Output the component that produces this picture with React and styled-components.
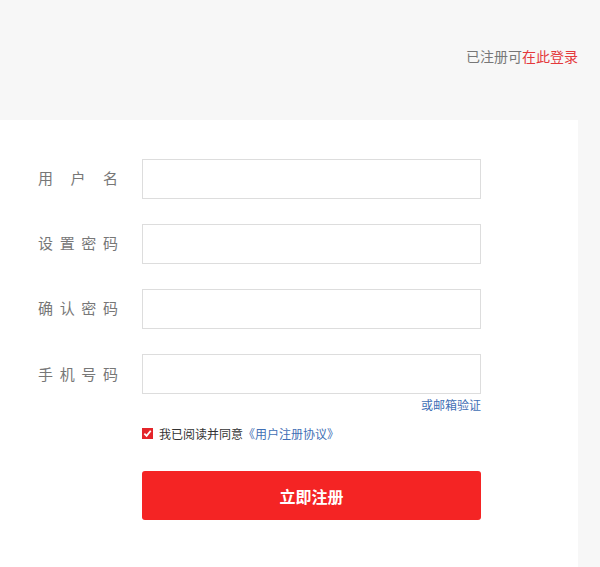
import React, { useState } from "react"
import styled, { createGlobalStyle } from "styled-components"

const GlobalStyle = createGlobalStyle`
body {
  margin: 0;
  background: #f7f7f7;
  font-family: "Liberation Sans", "Noto Sans CJK SC", sans-serif;
}
`

const Page = styled.div`
width: 600px;
height: 567px;
overflow: hidden;
background: #f7f7f7;
`

const Header = styled.div`
height: 120px;
display: flex;
align-items: center;
justify-content: flex-end;
padding-right: 22px;
box-sizing: border-box;
font-size: 14px;
color: #777;
padding-bottom: 8px;
`

const LoginLink = styled.a`
color: #e4393c;
text-decoration: none;
`

const Panel = styled.div`
width: 578px;
background: #fff;
padding: 39px 0 60px 38px;
box-sizing: border-box;
min-height: 447px;
`

const Row = styled.div`
display: flex;
align-items: ${(p) => (p.$last ? "flex-start" : "center")};
margin-bottom: ${(p) => (p.$last ? "0" : "25px")};
`

const Label = styled.label`
width: 80px;
margin-right: 24px;
margin-top: ${(p) => (p.$last ? "9px" : "0")};
padding-bottom: ${(p) => (p.$last ? "0" : "3px")};
display: flex;
justify-content: space-between;
font-size: 15px;
color: #777;
`

const Input = styled.input`
width: 339px;
height: 40px;
box-sizing: border-box;
border: 1px solid #ddd;
outline: none;
padding: 0 10px;
font-size: 14px;
`

const Field = styled.div`
display: flex;
flex-direction: column;
align-items: flex-end;
`

const EmailLink = styled.a`
font-size: 12px;
color: #3f6fb5;
text-decoration: none;
margin-top: 5px;
line-height: 14px;
`

const Agree = styled.div`
display: flex;
align-items: center;
margin: 12px 0 0 104px;
font-size: 12px;
color: #333;
`

const Check = styled.span`
width: 11px;
height: 11px;
background: #e4252a;
display: flex;
align-items: center;
justify-content: center;
margin-right: 6px;
`

const Protocol = styled.a`
color: #3f6fb5;
text-decoration: none;
`

const Submit = styled.button`
display: block;
margin: 29px 0 0 104px;
width: 339px;
height: 49px;
border: none;
border-radius: 3px;
background: #f42424;
color: #fff;
font-size: 16px;
font-weight: bold;
font-family: "Noto Sans CJK SC", sans-serif;
`

const fields = [
  { label: "用户名", type: "text" },
  { label: "设置密码", type: "password" },
  { label: "确认密码", type: "password" },
  { label: "手机号码", type: "text" },
]

export default function App() {
  const [checked, setChecked] = useState(true)
  return (
    <Page>
      <GlobalStyle />
      <Header>
        已注册可<LoginLink href="#">在此登录</LoginLink>
      </Header>
      <Panel>
        {fields.map((f, i) => {
          const last = i === fields.length - 1
          return (
            <Row key={i} $last={last}>
              <Label $last={last}>
                {f.label.split("").map((c, j) => <span key={j}>{c}</span>)}
              </Label>
              {last ? (
                <Field>
                  <Input type={f.type} />
                  <EmailLink href="#">或邮箱验证</EmailLink>
                </Field>
              ) : (
                <Input type={f.type} />
              )}
            </Row>
          )
        })}
        <Agree onClick={() => setChecked(!checked)}>
          <Check>
            {checked && (
              <svg width="9" height="9" viewBox="0 0 10 10">
                <path d="M1.5 5.2 L4 7.6 L8.6 2" stroke="#fff" strokeWidth="2" fill="none" />
              </svg>
            )}
          </Check>
          我已阅读并同意<Protocol href="#">《用户注册协议》</Protocol>
        </Agree>
        <Submit>立即注册</Submit>
      </Panel>
    </Page>
  )
}
